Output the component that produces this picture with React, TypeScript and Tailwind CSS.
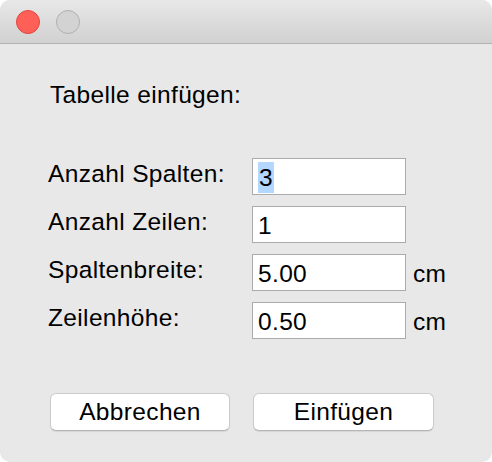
import React from 'react';

const font = { fontFamily: '"Liberation Sans", Arial, Helvetica, sans-serif' };

interface FieldRowProps {
  label: string;
  value: string;
  unit?: string;
  selected?: boolean;
}

const FieldRow: React.FC<FieldRowProps> = ({ label, value, unit, selected = false }) => (
  <div className="flex items-center h-[37px]">
    <div className="w-[204px] pb-[6px] leading-[28px]">{label}</div>
    <div className="w-[154px] h-[37px] bg-white border border-[#ababab] flex items-center pl-[5px] pt-[2px] leading-[28px]">
      {selected ? (
        <span className="inline-block bg-[#b3d7ff] h-[31px] leading-[31px] px-[1px]">{value}</span>
      ) : (
        <span>{value}</span>
      )}
    </div>
    {unit && <div className="ml-[7px] pt-[2px] leading-[28px]">{unit}</div>}
  </div>
);

export default function App() {
  return (
    <div className="w-[492px] h-[462px] bg-white text-[24.5px] tracking-[0.35px] text-black" style={font}>
      <div className="w-full h-full rounded-[10px] overflow-hidden bg-[#e8e8e8] flex flex-col">
        {/* Title bar */}
        <div className="h-[44px] shrink-0 bg-gradient-to-b from-[#e8e8e8] to-[#d1d1d1] border-b border-[#b2b2b2] flex items-center pl-[16px] gap-[16px]">
          <div className="w-[24px] h-[24px] rounded-full bg-[#fe5f57] border border-[#e2463f]" />
          <div className="w-[24px] h-[24px] rounded-full bg-[#d3d3d3] border border-[#afafaf]" />
        </div>

        {/* Content */}
        <div className="pl-[48px] pt-[37px]">
          <div className="leading-[28px] pl-[2px]">Tabelle einfügen:</div>

          <div className="mt-[49px] flex flex-col gap-[11px]">
            <FieldRow label="Anzahl Spalten:" value="3" selected />
            <FieldRow label="Anzahl Zeilen:" value="1" />
            <FieldRow label="Spaltenbreite:" value="5.00" unit="cm" />
            <FieldRow label="Zeilenhöhe:" value="0.50" unit="cm" />
          </div>

          <div className="mt-[54px] flex gap-[23px] pl-[2px]">
            <button className="w-[180px] h-[38px] bg-white rounded-[6px] border border-[#cbcbcb] border-b-[#b5b5b5] shadow-[0_1px_1px_rgba(0,0,0,0.08)] leading-[28px]">
              Abbrechen
            </button>
            <button className="w-[181px] h-[38px] bg-white rounded-[6px] border border-[#cbcbcb] border-b-[#b5b5b5] shadow-[0_1px_1px_rgba(0,0,0,0.08)] leading-[28px]">
              Einfügen
            </button>
          </div>
        </div>
      </div>
    </div>
  );
}
